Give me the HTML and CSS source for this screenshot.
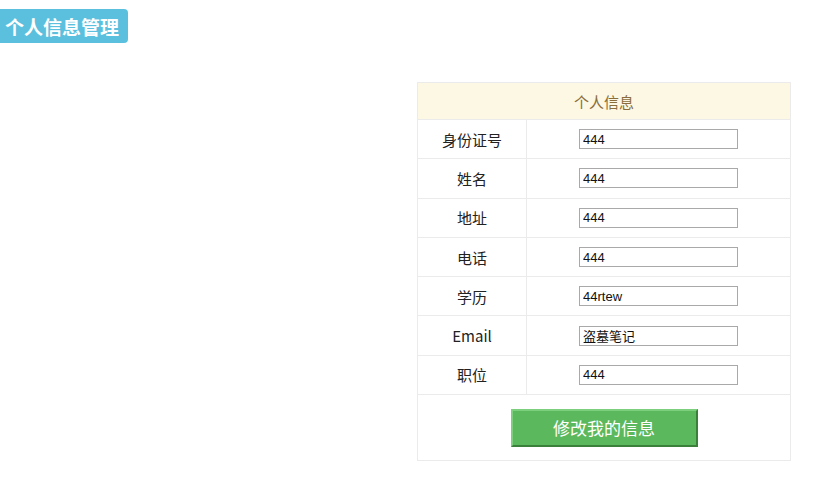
FILE: index.html
```html
<!DOCTYPE html>
<html lang="zh">
<head>
<meta charset="utf-8">
<title>个人信息管理</title>
<link rel="stylesheet" href="styles.css">
</head>
<body>
<div class="badge">个人信息管理</div>
<div class="main">
  <table class="info">
    <tr class="head"><td colspan="2">个人信息</td></tr>
    <tr><td class="label">身份证号</td><td class="field"><input type="text" value="444"></td></tr>
    <tr><td class="label">姓名</td><td class="field"><input type="text" value="444"></td></tr>
    <tr><td class="label">地址</td><td class="field"><input type="text" value="444"></td></tr>
    <tr><td class="label">电话</td><td class="field"><input type="text" value="444"></td></tr>
    <tr><td class="label">学历</td><td class="field"><input type="text" value="44rtew"></td></tr>
    <tr><td class="label">Email</td><td class="field"><input type="text" value="盗墓笔记"></td></tr>
    <tr><td class="label">职位</td><td class="field"><input type="text" value="444"></td></tr>
    <tr class="actions"><td colspan="2"><button type="button">修改我的信息</button></td></tr>
  </table>
</div>
</body>
</html>
```
FILE: styles.css
```css
html, body {
  margin: 0;
  padding: 0;
  background: #ffffff;
  font-family: "Noto Sans CJK SC", "Noto Sans", sans-serif;
}
.badge {
  display: inline-flex;
  align-items: center;
  margin-top: 9px;
  height: 34px;
  width: 128px;
  box-sizing: border-box;
  padding-left: 5px;
  background: #5bc0de;
  color: #ffffff;
  font-size: 19px;
  font-weight: bold;
  border-radius: 0 4px 4px 0;
}
.main {
  margin-top: 39px;
  padding-left: 417px;
}
.info {
  border-collapse: collapse;
  width: 374px;
  font-size: 15px;
  color: #222;
}
.info td {
  border: 1px solid #ebebeb;
  padding: 0;
  text-align: center;
}
.head td {
  height: 36px;
  background: #fcf8e3;
  color: #8a6d3b;
}
.label {
  width: 108px;
  height: 38.3px;
}
.field input {
  display: block;
  width: 159px;
  height: 20px;
  box-sizing: border-box;
  border: 1px solid #a9a9a9;
  padding: 0 3px;
  margin: 0 auto;
  font-family: "Liberation Sans", "Noto Sans CJK SC", sans-serif;
  font-size: 13px;
  color: #111;
}
.actions td {
  height: 65px;
}
.actions button {
  width: 187px;
  height: 38px;
  background: #5cb85c;
  color: #ffffff;
  font-family: "Noto Sans CJK SC", sans-serif;
  font-size: 17px;
  border: 2px solid;
  border-color: #7ccf7c #3a7f3a #3a7f3a #7ccf7c;
  padding: 0;
  margin: 0;
  vertical-align: middle;
}
```
